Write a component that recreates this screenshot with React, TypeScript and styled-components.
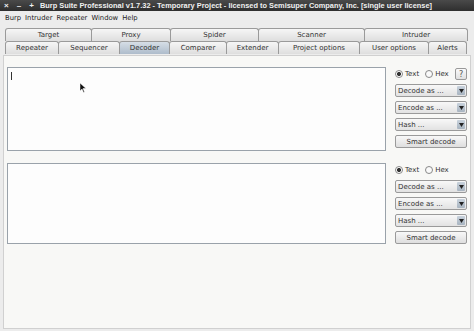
import React from "react";
import styled, { createGlobalStyle } from "styled-components";

const Global = createGlobalStyle`
  html, body { margin: 0; padding: 0; background: #ececec; }
  body { font-family: "DejaVu Sans", "Liberation Sans", sans-serif; }
`;

const Window = styled.div`
  width: 474px;
  height: 331px;
  display: flex;
  flex-direction: column;
  background: #ececec;
  overflow: hidden;
`;

const TitleBar = styled.div`
  height: 11px;
  background: linear-gradient(#4a4a4a, #2e2e2e);
  color: #f0f0f0;
  font-family: "Liberation Sans", Arial, sans-serif;
  font-weight: bold;
  font-size: 7.4px;
  display: flex;
  align-items: center;
  white-space: nowrap;
  padding-left: 4px;
`;

const TitleButtons = styled.span`
  display: flex;
  gap: 8px;
  width: 36px;
  font-size: 8px;
`;

const MenuBar = styled.div`
  height: 13px;
  display: flex;
  align-items: center;
  gap: 4px;
  padding-left: 5px;
  font-size: 6.8px;
  color: #222;
`;

const Tabs = styled.div`
  padding: 4px 4px 0 5px;
  display: flex;
  flex-direction: column;
`;

const TabRow = styled.div`
  display: flex;
  height: 13px;
`;

const Tab = styled.div<{ $w: number; $active?: boolean }>`
  width: ${(p) => p.$w}px;
  box-sizing: border-box;
  border: 1px solid #9a9a9a;
  border-bottom: none;
  border-radius: 3px 3px 0 0;
  margin-right: -1px;
  background: ${(p) =>
    p.$active
      ? "linear-gradient(#d6dee6, #aebccb)"
      : "linear-gradient(#f6f6f6, #dedede)"};
  font-size: 7px;
  color: #333;
  display: flex;
  align-items: center;
  justify-content: center;
  white-space: nowrap;
`;

const Content = styled.div`
  flex: 1;
  margin: 1px 3px 2px 3px;
  border: 1px solid #d0d0d0;
  background: #f8f8f6;
  padding: 11px 3px 0 3px;
  display: flex;
  flex-direction: column;
  gap: 12px;
`;

const Section = styled.div`
  display: flex;
  gap: 9px;
`;

const Editor = styled.div<{ $h: number }>`
  width: 379px;
  height: ${(p) => p.$h}px;
  box-sizing: border-box;
  border: 1px solid #9aa2aa;
  background: #fdfdfd;
  position: relative;
`;

const Caret = styled.div`
  position: absolute;
  left: 3px;
  top: 4px;
  width: 1px;
  height: 8px;
  background: #333;
`;

const Cursor = styled.svg`
  position: absolute;
  left: 72px;
  top: 15px;
`;

const Side = styled.div`
  width: 72px;
  display: flex;
  flex-direction: column;
  gap: 4px;
  padding-top: 1px;
`;

const RadioRow = styled.div`
  display: flex;
  align-items: center;
  height: 12px;
  font-size: 7px;
  color: #333;
`;

const Radio = styled.span<{ $on?: boolean }>`
  width: 8px;
  height: 8px;
  box-sizing: border-box;
  border-radius: 50%;
  border: 1px solid #888;
  background: ${(p) =>
    p.$on ? "radial-gradient(circle, #333 0 1.8px, #fff 2.3px)" : "#fafafa"};
  margin-right: 2px;
`;

const RadioLabel = styled.span`
  margin-right: 6px;
`;

const Help = styled.span`
  margin-left: auto;
  width: 12px;
  height: 12px;
  box-sizing: border-box;
  border: 1px solid #999;
  border-radius: 2px;
  background: linear-gradient(#fafafa, #e0e0e0);
  font-size: 8px;
  color: #555;
  display: flex;
  align-items: center;
  justify-content: center;
`;

const Select = styled.div`
  height: 13px;
  box-sizing: border-box;
  border: 1px solid #9a9a9a;
  border-radius: 2px;
  background: linear-gradient(#f8f8f8, #e2e2e2);
  display: flex;
  align-items: center;
  font-size: 7px;
  color: #333;
  padding-left: 2px;
`;

const SelectText = styled.span`
  flex: 1;
  white-space: nowrap;
`;

const Arrow = styled.span`
  width: 8px;
  height: 9px;
  margin-right: 1px;
  background: linear-gradient(#c8d2dc, #a8b4c0);
  display: flex;
  align-items: center;
  justify-content: center;
  border-radius: 1px;
`;

const Button = styled.div`
  height: 13px;
  box-sizing: border-box;
  border: 1px solid #9a9a9a;
  border-radius: 2px;
  background: linear-gradient(#f8f8f8, #dedede);
  font-size: 7px;
  color: #333;
  display: flex;
  align-items: center;
  justify-content: center;
`;

const Tri = () => (
  <svg width="5" height="4" viewBox="0 0 5 4">
    <path d="M0 0 L5 0 L2.5 4 Z" fill="#222" />
  </svg>
);

const row1: [string, number][] = [
  ["Target", 87],
  ["Proxy", 80],
  ["Spider", 89],
  ["Scanner", 107],
  ["Intruder", 104],
];
const row2: [string, number][] = [
  ["Repeater", 54],
  ["Sequencer", 62],
  ["Decoder", 51],
  ["Comparer", 58],
  ["Extender", 53],
  ["Project options", 82],
  ["User options", 70],
  ["Alerts", 39],
];

const Controls = ({ help }: { help?: boolean }) => (
  <Side>
    <RadioRow>
      <Radio $on />
      <RadioLabel>Text</RadioLabel>
      <Radio />
      <RadioLabel>Hex</RadioLabel>
      {help && <Help>?</Help>}
    </RadioRow>
    {["Decode as ...", "Encode as ...", "Hash ..."].map((t) => (
      <Select key={t}>
        <SelectText>{t}</SelectText>
        <Arrow>
          <Tri />
        </Arrow>
      </Select>
    ))}
    <Button>Smart decode</Button>
  </Side>
);

export default function App() {
  return (
    <Window>
      <Global />
      <TitleBar>
        <TitleButtons>
          <span>×</span>
          <span>–</span>
          <span>+</span>
        </TitleButtons>
        Burp Suite Professional v1.7.32 - Temporary Project - licensed to
        Semisuper Company, Inc. [single user license]
      </TitleBar>
      <MenuBar>
        <span>Burp</span>
        <span>Intruder</span>
        <span>Repeater</span>
        <span>Window</span>
        <span>Help</span>
      </MenuBar>
      <Tabs>
        <TabRow>
          {row1.map(([t, w]) => (
            <Tab key={t} $w={w}>
              {t}
            </Tab>
          ))}
        </TabRow>
        <TabRow>
          {row2.map(([t, w]) => (
            <Tab key={t} $w={w} $active={t === "Decoder"}>
              {t}
            </Tab>
          ))}
        </TabRow>
      </Tabs>
      <Content>
        <Section>
          <Editor $h={84}>
            <Caret />
            <Cursor width="7" height="10" viewBox="0 0 7 10">
              <path d="M0 0 L0 8 L2 6 L3.5 9.5 L4.5 9 L3 5.5 L6 5.5 Z" fill="#111" stroke="#fff" strokeWidth="0.5" />
            </Cursor>
          </Editor>
          <Controls help />
        </Section>
        <Section>
          <Editor $h={81} />
          <Controls />
        </Section>
      </Content>
    </Window>
  );
}
